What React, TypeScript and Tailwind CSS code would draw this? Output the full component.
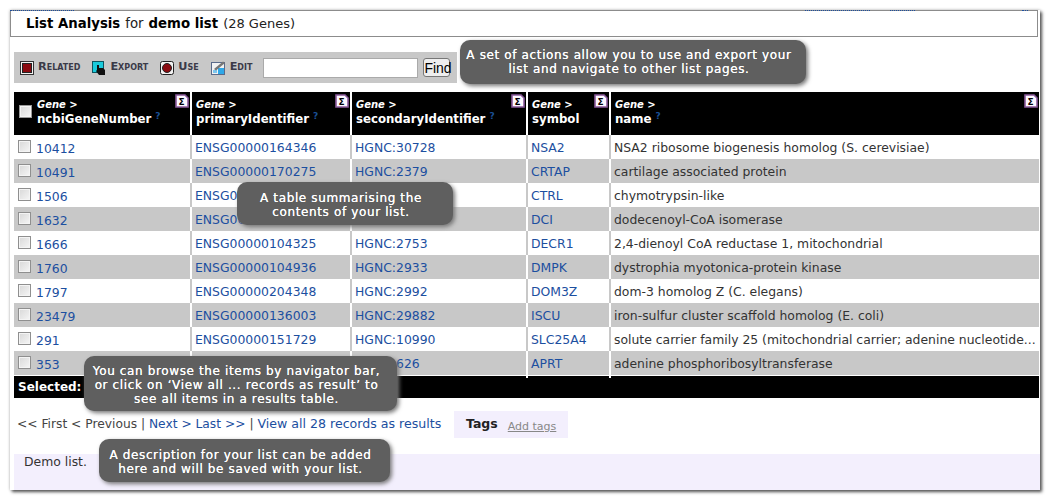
import React from 'react';

const rows = [
  ['10412', 'ENSG00000164346', 'HGNC:30728', 'NSA2', 'NSA2 ribosome biogenesis homolog (S. cerevisiae)'],
  ['10491', 'ENSG00000170275', 'HGNC:2379', 'CRTAP', 'cartilage associated protein'],
  ['1506', 'ENSG00000118520', 'HGNC:2536', 'CTRL', 'chymotrypsin-like'],
  ['1632', 'ENSG00000167969', 'HGNC:2703', 'DCI', 'dodecenoyl-CoA isomerase'],
  ['1666', 'ENSG00000104325', 'HGNC:2753', 'DECR1', '2,4-dienoyl CoA reductase 1, mitochondrial'],
  ['1760', 'ENSG00000104936', 'HGNC:2933', 'DMPK', 'dystrophia myotonica-protein kinase'],
  ['1797', 'ENSG00000204348', 'HGNC:2992', 'DOM3Z', 'dom-3 homolog Z (C. elegans)'],
  ['23479', 'ENSG00000136003', 'HGNC:29882', 'ISCU', 'iron-sulfur cluster scaffold homolog (E. coli)'],
  ['291', 'ENSG00000151729', 'HGNC:10990', 'SLC25A4', 'solute carrier family 25 (mitochondrial carrier; adenine nucleotide...'],
  ['353', 'ENSG00000198931', 'HGNC:626', 'APRT', 'adenine phosphoribosyltransferase'],
];

const cols = 'grid grid-cols-[176px_160px_176px_83px_1fr]';

const Checkbox = ({ className = '' }: { className?: string }) => (
  <span className={`block w-[13px] h-[13px] border border-[#8f8f8f] bg-gradient-to-br from-[#d8d8d8] to-[#f6f6f6] shadow-[inset_0_0_0_1px_#f4f4f4] ${className}`} />
);

const SigmaIcon = () => (
  <svg className="absolute right-[1px] top-[2px]" width="14" height="14" viewBox="0 0 14 14">
    <path d="M1 1h9l3 3v9H1z" fill="#fdf8ff" stroke="#8a5a9c" strokeWidth="1.6" />
    <text x="6.6" y="10.5" textAnchor="middle" fontSize="9" fontWeight="700" fill="#000" fontFamily="DejaVu Sans">Σ</text>
  </svg>
);

const Head = ({ name, first, help = true }: { name: string; first?: boolean; help?: boolean }) => (
  <div className={`relative h-[43px] bg-black text-white ${first ? 'pl-[23px]' : 'border-l-2 border-white pl-[4px]'}`}>
    {first && <Checkbox className="absolute left-[5px] top-[13px] border-[#999]" />}
    <SigmaIcon />
    <div className="pt-[6px] text-[10px] leading-[13px] italic font-bold">Gene &gt;</div>
    <div className="mt-[1px] text-[11.75px] leading-[15px] font-bold">
      {name}
      {help && <sup className="ml-[4px] text-[9px] text-[#1a4f94]">?</sup>}
    </div>
  </div>
);

const Tip = ({ className, children }: { className: string; children: React.ReactNode }) => (
  <div className={`absolute rounded-[10px] bg-[#5f5f5f] text-white text-center text-[12px] leading-[14px] tracking-[0.63px] [text-shadow:0_0_0.6px_#fff] shadow-[2px_2px_4px_#777] ${className}`}>
    {children}
  </div>
);

const Action = ({ icon, label }: { icon: React.ReactNode; label: string }) => (
  <span className="flex items-center gap-[4px] text-[#3a3a48] font-bold text-[11.3px] [font-variant:small-caps]">
    {icon}
    {label}
  </span>
);

const RelatedIcon = () => (
  <svg width="14" height="14" viewBox="0 0 14 14">
    <rect x="0.5" y="0.5" width="13" height="13" fill="#f2f2f2" stroke="#333" />
    <rect x="2.5" y="2.5" width="9" height="9" fill="#8b0a10" stroke="#222" />
  </svg>
);

const ExportIcon = () => (
  <svg width="14" height="14" viewBox="0 0 14 14">
    <rect x="0.5" y="0.5" width="11" height="11" fill="#19cbdc" stroke="#0d5560" />
    <path d="M5 4h2v3h4l2 2v5H7L4 10l1-1z" fill="#111" />
  </svg>
);

const UseIcon = () => (
  <svg width="14" height="14" viewBox="0 0 14 14">
    <rect x="0.5" y="0.5" width="13" height="13" rx="2" fill="#f2f2f2" stroke="#222" />
    <circle cx="7" cy="7" r="4.5" fill="#8b0a10" stroke="#222" />
  </svg>
);

const EditIcon = () => (
  <svg width="15" height="14" viewBox="0 0 15 14">
    <rect x="0.5" y="1.5" width="13" height="12" fill="#f2f2f2" stroke="#5a6a8a" />
    <rect x="7" y="7" width="6" height="6" fill="#2fa8e8" />
    <rect x="2" y="9" width="4" height="3" fill="#7cc7ef" />
    <path d="M3 8L12 0.5l2 1.5L5 9.5z" fill="#777" />
  </svg>
);

export default function App() {
  return (
    <div className="bg-white w-[1051px] h-[502px] pl-[10px] pt-[10px] font-['DejaVu_Sans',sans-serif] text-[12.4px] text-[#333] overflow-hidden">
      <div className="relative w-[1030px] h-[480px] bg-white shadow-[2px_2px_3px_#555,0_0_3px_#bbb]">
        {/* leftover dotted link underlines along the top edge */}
        <div className="absolute left-0 top-0 w-[64px] border-t border-dotted border-[#1c4fa0]" />
        <div className="absolute left-[795px] top-0 w-[65px] border-t border-dotted border-[#1c4fa0]" />
        <div className="absolute left-[880px] top-0 w-[25px] border-t border-dotted border-[#1c4fa0]" />
        <div className="absolute left-[1012px] top-0 w-[6px] border-t border-dotted border-[#1c4fa0]" />

        <div className="w-[1028px] h-[27px] border border-[#8c8c8c] pl-[15px] flex items-center gap-[5px] text-[#222] text-[13.3px]">
          <span className="font-bold text-black">List Analysis</span>
          <span>for</span>
          <span className="font-bold text-black">demo list</span>
          <span className="text-[13px]">(28 Genes)</span>
        </div>

        <div className="ml-[4px] mt-[15px] w-[443px] h-[31px] bg-[#c8c8c8] flex items-center pl-[6px]">
          <div className="flex items-center gap-[12px]">
            <Action icon={<RelatedIcon />} label="Related" />
            <Action icon={<ExportIcon />} label="Export" />
            <Action icon={<UseIcon />} label="Use" />
            <Action icon={<EditIcon />} label="Edit" />
          </div>
          <input className="ml-[11px] w-[155px] h-[20px] bg-white border border-[#aaa]" readOnly />
          <button className="ml-[5px] w-[27px] h-[19px] rounded-[3px] border border-[#777] bg-[#eee] text-black text-[14px] leading-none font-['Liberation_Sans',sans-serif]">
            Find
          </button>
        </div>

        <div className="ml-[4px] mt-[9px] w-[1025px]">
          <div className={cols}>
            <Head name="ncbiGeneNumber" first />
            <Head name="primaryIdentifier" />
            <Head name="secondaryIdentifier" />
            <Head name="symbol" help={false} />
            <Head name="name" />
          </div>
          {rows.map((r, i) => {
            const sep = i % 2 ? 'border-l-2 border-white' : 'border-l-2 border-[#c8c8c8]';
            return (
              <div key={r[0]} className={`${cols} h-[24px] leading-[26px] ${i % 2 ? 'bg-[#c8c8c8]' : 'bg-white'}`}>
                <div className="flex pl-[4px] text-[#1c4fa0]">
                  <Checkbox className="mt-[5px]" />
                  <span className="ml-[5px] mt-[1px]">{r[0]}</span>
                </div>
                <div className={`${sep} pl-[3px] text-[#1c4fa0]`}>{r[1]}</div>
                <div className={`${sep} pl-[3px] text-[#1c4fa0]`}>{r[2]}</div>
                <div className={`${sep} pl-[3px] text-[#1c4fa0]`}>{r[3]}</div>
                <div className={`${sep} pl-[3px] whitespace-nowrap overflow-hidden`}>{r[4]}</div>
              </div>
            );
          })}
          <div className="mt-[1px] h-[22px] leading-[22px] bg-black text-white font-bold text-[12px] pl-[4px]">Selected:</div>
        </div>

        <div className="mt-[13px] ml-[7px] h-[27px] flex items-center whitespace-pre text-[12.25px]">
          <span className="w-[437px]">
            <span className="text-[#444]">&lt;&lt; First &lt; Previous | </span>
            <span className="text-[#1c4fa0]">Next &gt; Last &gt;&gt;</span>
            <span className="text-[#444]"> | </span>
            <span className="text-[#1c4fa0] text-[12.6px]">View all 28 records as results</span>
          </span>
          <div className="w-[114px] h-[27px] bg-[#f3effd] flex items-center pl-[12px]">
            <span className="font-bold text-[#222] text-[12.5px]">Tags</span>
            <span className="ml-[10px] mt-[5px] text-[11px] text-[#888] underline">Add tags</span>
          </div>
        </div>

        <div className="mt-[16px] ml-[4px] w-[1026px] h-[36px] bg-[#f3effd] pl-[10px] leading-[15px]">Demo list.</div>

        <Tip className="left-[450px] top-[30px] w-[346px] h-[44px] pt-[8px] pr-[8px]">
          A set of actions allow you to use and export your
          <br />
          list and navigate to other list pages.
        </Tip>
        <Tip className="left-[227px] top-[172px] w-[216px] h-[43px] pt-[9px] pr-[8px]">
          A table summarising the
          <br />
          contents of your list.
        </Tip>
        <Tip className="left-[74px] top-[346px] w-[313px] h-[55px] pt-[8px] pr-[8px]">
          You can browse the items by navigator bar,
          <br />
          or click on ‘View all ... records as result’ to
          <br />
          see all items in a results table.
        </Tip>
        <Tip className="left-[89px] top-[429px] w-[291px] h-[43px] pt-[9px] pr-[8px]">
          A description for your list can be added
          <br />
          here and will be saved with your list.
        </Tip>
      </div>
    </div>
  );
}
